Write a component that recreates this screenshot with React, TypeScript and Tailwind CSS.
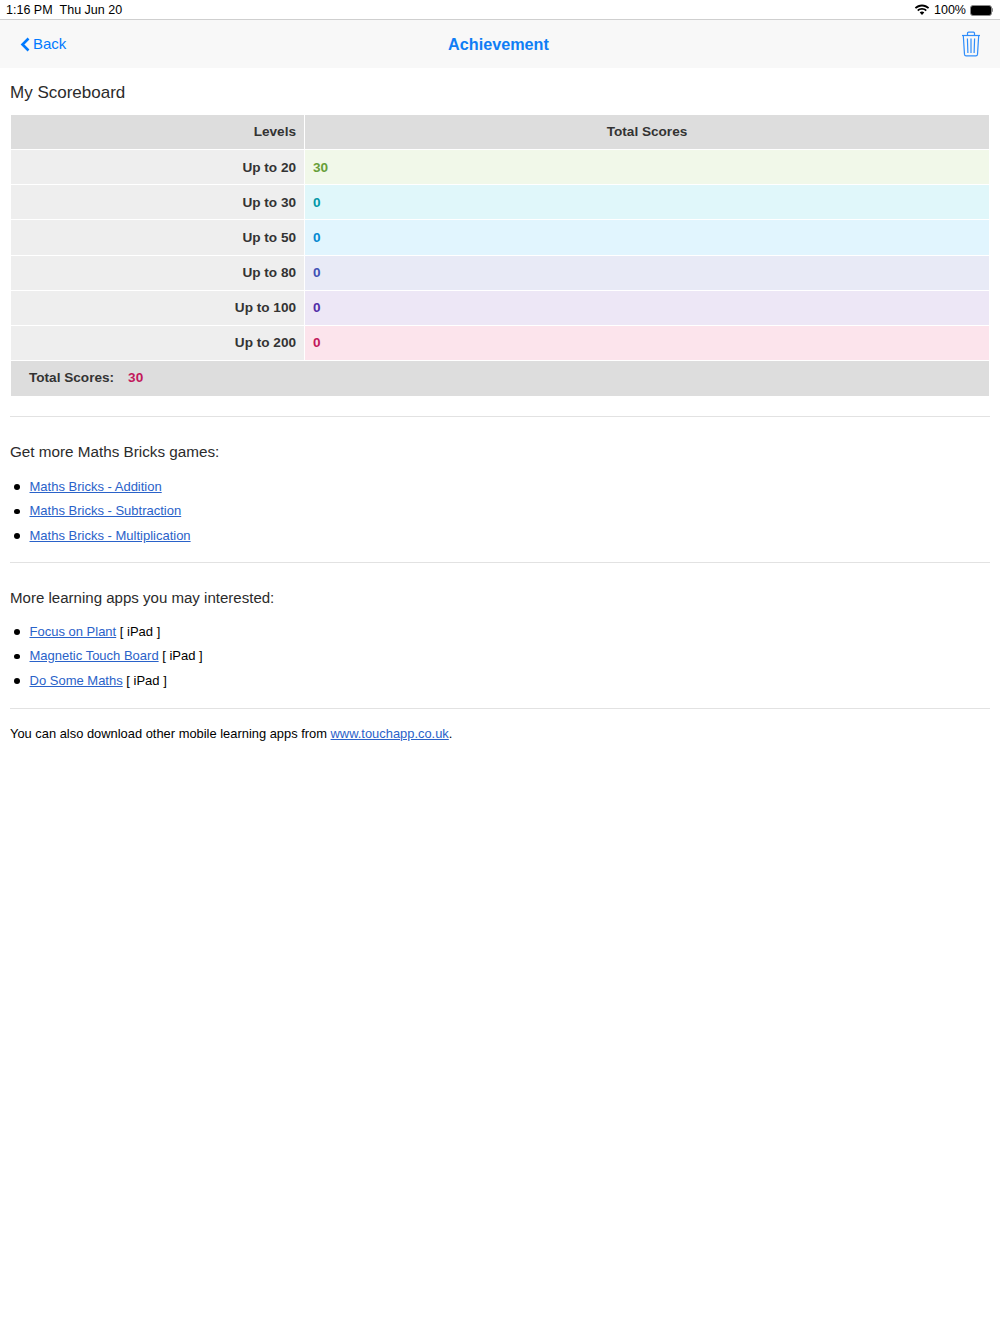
const rows = [
  { level: "Up to 20", score: "30", bg: "bg-[#f1f8e9]", color: "text-[#689f38]" },
  { level: "Up to 30", score: "0", bg: "bg-[#e0f7fa]", color: "text-[#0097a7]" },
  { level: "Up to 50", score: "0", bg: "bg-[#e1f5fe]", color: "text-[#0288d1]" },
  { level: "Up to 80", score: "0", bg: "bg-[#e8eaf6]", color: "text-[#3f51b5]" },
  { level: "Up to 100", score: "0", bg: "bg-[#ede7f6]", color: "text-[#512da8]" },
  { level: "Up to 200", score: "0", bg: "bg-[#fce4ec]", color: "text-[#c2185b]" },
];

function LinkText({ children }: { children: React.ReactNode }) {
  return (
    <a href="#" className="text-[#2a62c9] underline">
      {children}
    </a>
  );
}

function Item({ children, first }: { children: React.ReactNode; first?: boolean }) {
  return (
    <li className={first ? "flex items-center pl-[4px]" : "mt-[8.5px] flex items-center pl-[4px]"}>
      <span className="mr-[10px] mt-[1px] h-[5.5px] w-[5.5px] rounded-full bg-black" />
      <span>{children}</span>
    </li>
  );
}

function TrashIcon() {
  return (
    <svg width="20" height="26" viewBox="0 0 20 26" fill="none" stroke="#2f8dfb" strokeWidth="1.2">
      <path d="M1 4.5h18" />
      <path d="M6.5 4.5V2.2c0-.7.4-1.1 1.1-1.1h4.8c.7 0 1.1.4 1.1 1.1v2.3" />
      <path d="M2.3 4.5l1.2 18.9c.1 1 .7 1.5 1.6 1.5h9.8c.9 0 1.5-.5 1.6-1.5l1.2-18.9" />
      <path d="M6.4 7.5l.5 14.5M10 7.5V22M13.6 7.5L13.1 22" />
    </svg>
  );
}

export default function App() {
  return (
    <div className="min-h-[1334px] bg-white font-['Liberation_Sans',Arial,sans-serif] text-black">
      <div className="flex h-5 items-center justify-between border-b border-[#cfcfcf] bg-white pl-[6px] pr-[7px] pt-[1px] text-[12.5px]">
        <div className="flex gap-[7px]">
          <span>1:16 PM</span>
          <span>Thu Jun 20</span>
        </div>
        <div className="flex items-center gap-[4px]">
          <svg width="16" height="12" viewBox="0 0 16 12" fill="#000">
            <path d="M8 2.4c2.3 0 4.4.9 6 2.4l1.2-1.3C13.3 1.7 10.8.6 8 .6S2.7 1.7.8 3.5L2 4.8c1.6-1.5 3.7-2.4 6-2.4z" />
            <path d="M8 5.8c1.4 0 2.6.5 3.6 1.4l1.2-1.3C11.5 4.7 9.8 4 8 4s-3.5.7-4.8 1.9l1.2 1.3c1-.9 2.2-1.4 3.6-1.4z" />
            <path d="M8 7.5c-.9 0-1.7.3-2.3.9L8 11l2.3-2.6c-.6-.6-1.4-.9-2.3-.9z" />
          </svg>
          <span>100%</span>
          <div className="flex items-center">
            <div className="h-[11px] w-[22px] rounded-[3px] border border-[#8a8a8a] bg-black" />
            <div className="h-1 w-[1px] rounded-r bg-[#8a8a8a]" />
          </div>
        </div>
      </div>

      <div className="flex h-[48px] items-center justify-between bg-[#f8f8f8] pl-[20px] pr-[19px] text-[#007aff]">
        <div className="flex w-[116px] items-center gap-[3px] pt-[1px] text-[15px]">
          <svg width="10" height="15" viewBox="0 0 10 15" fill="none" stroke="#007aff" strokeWidth="2.6">
            <path d="M8.5 1.5L2.5 7.5l6 6" />
          </svg>
          <span>Back</span>
        </div>
        <div className="text-[16.2px] font-bold text-[#0f7ef5]">Achievement</div>
        <div className="flex w-[120px] justify-end">
          <TrashIcon />
        </div>
      </div>

      <div className="px-[10px]">
        <h2 className="mt-[14px] text-[17px] leading-[21px] text-[#2b2b2b]">My Scoreboard</h2>

        <div className="mt-[12px] px-[1px] text-[13.6px] font-bold text-[#333]">
          <div className="grid h-[35.15px] grid-cols-[293px_1px_1fr] border-b border-white bg-[#dddddd]">
            <div className="flex items-center justify-end pr-[8px] pt-[1px]">Levels</div>
            <div className="bg-white" />
            <div className="flex items-center justify-center pt-[1px]">Total Scores</div>
          </div>
          {rows.map((row) => (
            <div key={row.level} className="grid h-[35.15px] grid-cols-[293px_1px_1fr] border-b border-white">
              <div className="flex items-center justify-end bg-[#eeeeee] pr-[8px] pt-[1px]">{row.level}</div>
              <div className="bg-white" />
              <div className={"flex items-center pl-[8px] pt-[1px] " + row.bg + " " + row.color}>{row.score}</div>
            </div>
          ))}
          <div className="flex h-[35.15px] items-center gap-[14px] bg-[#dddddd] pl-[18px]">
            <span>Total Scores:</span>
            <span className="text-[#c2185b]">30</span>
          </div>
        </div>

        <hr className="mt-[20px] border-[#e2e2e2]" />

        <h3 className="mt-[25px] text-[15.25px] leading-[19px] text-[#2b2b2b]">Get more Maths Bricks games:</h3>
        <ul className="mt-[17.5px] text-[13px] leading-[16px]">
          <Item first><LinkText>Maths Bricks - Addition</LinkText></Item>
          <Item><LinkText>Maths Bricks - Subtraction</LinkText></Item>
          <Item><LinkText>Maths Bricks - Multiplication</LinkText></Item>
        </ul>

        <hr className="mt-[18px] border-[#e2e2e2]" />

        <h3 className="mt-[25px] text-[15.05px] leading-[19px] text-[#2b2b2b]">More learning apps you may interested:</h3>
        <ul className="mt-[17px] text-[13px] leading-[16px]">
          <Item first><LinkText>Focus on Plant</LinkText> [ iPad ]</Item>
          <Item><LinkText>Magnetic Touch Board</LinkText> [ iPad ]</Item>
          <Item><LinkText>Do Some Maths</LinkText> [ iPad ]</Item>
        </ul>

        <hr className="mt-[19px] border-[#e2e2e2]" />

        <p className="mt-[17px] text-[12.9px] leading-[16px]">
          You can also download other mobile learning apps from <LinkText>www.touchapp.co.uk</LinkText>.
        </p>
      </div>
    </div>
  );
}
